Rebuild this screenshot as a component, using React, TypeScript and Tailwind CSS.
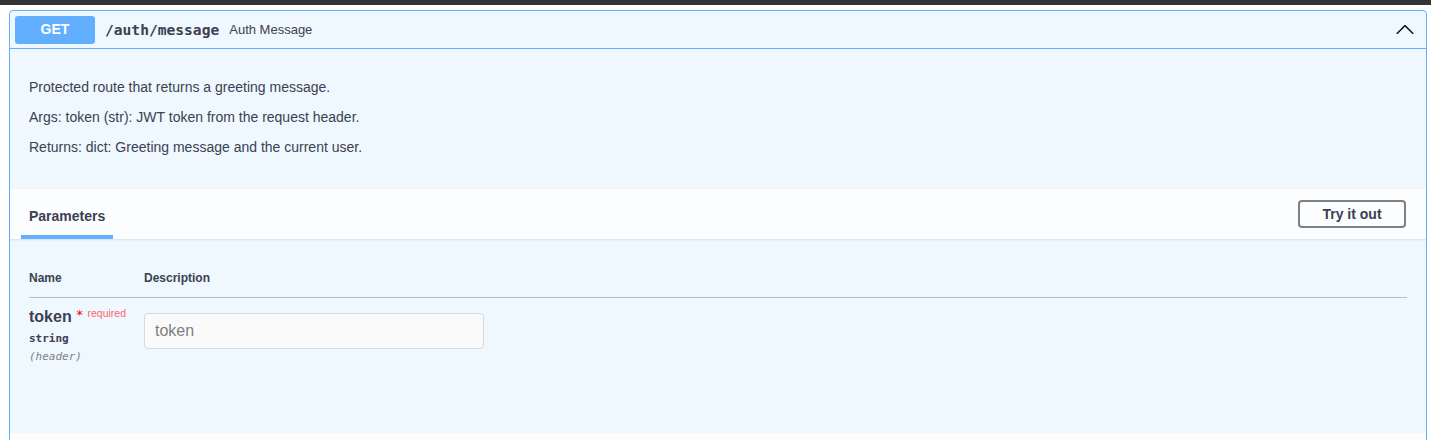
const sans = "font-['Liberation_Sans',Arial,sans-serif]";
const mono = "font-['DejaVu_Sans_Mono',monospace]";

const descLines = [
  "Protected route that returns a greeting message.",
  "Args: token (str): JWT token from the request header.",
  "Returns: dict: Greeting message and the current user.",
];

function Chevron() {
  return (
    <svg width="20" height="20" viewBox="0 0 20 20" className="rotate-180 fill-[#111]">
      <path d="M17.418 6.109c.272-.268.709-.268.979 0s.271.701 0 .969l-7.908 7.83c-.27.268-.707.268-.979 0l-7.908-7.83c-.27-.268-.27-.701 0-.969.271-.268.709-.268.979 0L10 13.25l7.418-7.141z" />
    </svg>
  );
}

export default function App() {
  return (
    <div className={`min-h-[440px] w-full overflow-hidden bg-white text-[#3b4151] ${sans}`}>
      <div className="h-[5px] bg-[#333333]" />
      <div className="ml-[9px] mr-[4px] mt-[5px] rounded-t-[4px] border border-[#61affe] bg-[#eff7ff]">
        {/* summary */}
        <div className="flex h-[38px] items-center border-b border-[#61affe] px-[5px]">
          <span className="flex h-[28px] w-[80px] items-center justify-center rounded-[3px] bg-[#61affe] text-[14px] font-bold text-white">
            GET
          </span>
          <span className={`ml-[10px] text-[14.6px] font-bold ${mono}`}>/auth/message</span>
          <span className="ml-[10px] text-[13px]">Auth Message</span>
          <span className="ml-auto mr-[6px] flex">
            <Chevron />
          </span>
        </div>

        {/* description */}
        <div className="px-[19px] pb-[32px] pt-[28px] text-[14px]">
          {descLines.map((line) => (
            <p key={line} className="mb-[10px] leading-[20px] last:mb-0">
              {line}
            </p>
          ))}
        </div>

        {/* parameters header */}
        <div className="flex h-[50px] items-center justify-between bg-[#fcfdff] px-[11px] shadow-[0_1px_2px_rgba(0,0,0,0.1)]">
          <div className="flex flex-col self-end">
            <span className="border-b-4 border-[#61affe] px-[8px] pb-[10px] text-[14px] font-bold leading-[17px]">
              Parameters
            </span>
          </div>
          <button className="mr-[9px] h-[28px] w-[108px] rounded-[4px] border-2 border-[#808080] text-[14px] font-bold">
            Try it out
          </button>
        </div>

        {/* parameters table */}
        <div className="h-[194px] px-[19px] pt-[31px]">
          <div className="flex h-[28px] items-start border-b border-[#b9bfc9] text-[12px] font-bold leading-[17px]">
            <span className="w-[115px]">Name</span>
            <span>Description</span>
          </div>
          <div className="flex pt-[9px]">
            <div className="w-[115px]">
              <div className="flex items-start leading-[20px]">
                <span className="text-[16px] font-bold">token</span>
                <span className={`ml-[4px] text-[13px] leading-[16px] text-[#ff0000] ${mono}`}>*</span>
                <span className="ml-[4px] text-[10.5px] leading-[12px] text-[#ff6666]">required</span>
              </div>
              <div className={`mt-[3px] text-[11px] font-semibold leading-[18px] ${mono}`}>string</div>
              <div className={`text-[11px] italic leading-[18px] text-[#808080] ${mono}`}>(header)</div>
            </div>
            <input
              placeholder="token"
              className="mt-[6px] h-[36px] w-[340px] rounded-[4px] border border-[#d9d9d9] bg-[#fafafa] px-[10px] text-[16px] outline-none placeholder:text-[#808080]"
            />
          </div>
        </div>

        {/* responses header start */}
        <div className="h-[50px] bg-[#fcfdff]" />
      </div>
    </div>
  );
}
